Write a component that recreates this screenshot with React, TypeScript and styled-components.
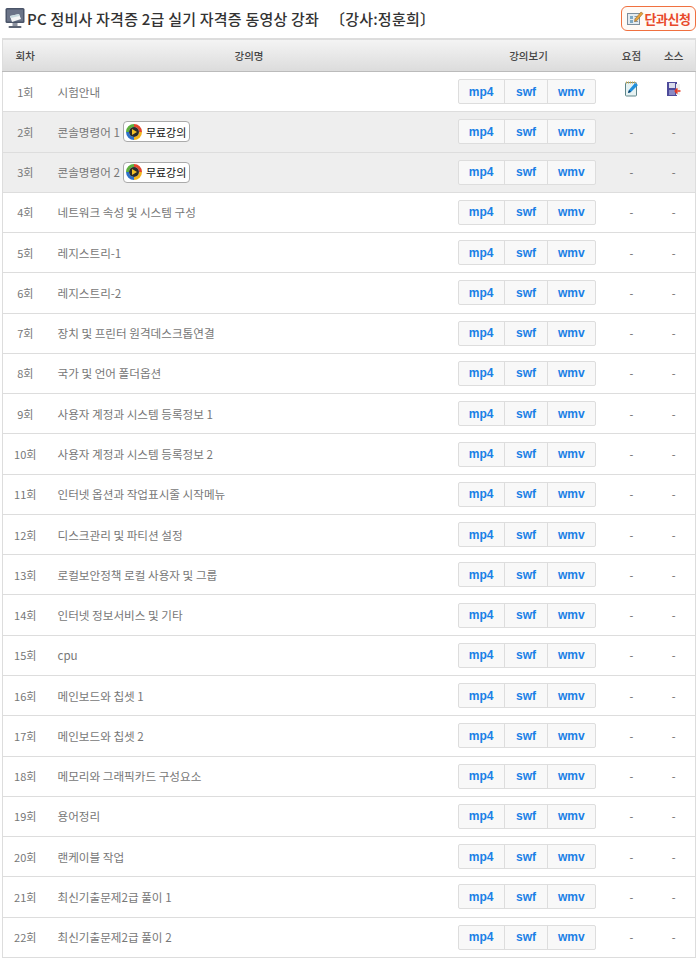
import React from "react";
import styled, { createGlobalStyle } from "styled-components";

const Global = createGlobalStyle`
  html, body { margin: 0; padding: 0; background: #fff; }
  body { font-family: "Noto Sans CJK KR", "Noto Sans", sans-serif; color: #555; }
`;

const Page = styled.div`
  width: 700px;
  height: 960px;
  overflow: hidden;
  box-sizing: border-box;
  padding: 0 4px 0 2px;
`;

const TitleBar = styled.div`
  height: 38px;
  display: flex;
  align-items: center;
  justify-content: space-between;
  padding: 0 0 2px 3px;
  box-sizing: border-box;
`;

const Title = styled.h1`
  margin: 0;
  display: flex;
  align-items: center;
  gap: 2px;
  font-size: 15px;
  font-weight: 500;
  color: #333;
  letter-spacing: 0.22px;
  white-space: pre;
`;

const ApplyButton = styled.a`
  display: flex;
  align-items: center;
  justify-content: center;
  gap: 1px;
  width: 75px;
  height: 25px;
  box-sizing: border-box;
  border: 1px solid #f0703f;
  border-radius: 6px;
  background: #fffaf6;
  color: #e8492a;
  font-size: 13px;
  font-weight: 700;
  letter-spacing: -0.5px;
`;

const Table = styled.table`
  width: 693px;
  table-layout: fixed;
  border-collapse: collapse;
  border-left: 1px solid #ddd;
  border-right: 1px solid #ddd;
`;

const HeadRow = styled.tr`
  height: 33px;
  background: linear-gradient(#f4f4f4, #dcdcdc);
  border-top: 1px solid #ddd;
  border-bottom: 1px solid #bbb;
`;

const HeadCell = styled.th<{ $inset?: number }>`
  padding: 0 0 0 ${(p) => p.$inset ?? 0}px;
  font-size: 10.5px;
  font-weight: 500;
  color: #444;
  text-align: center;
`;

const Row = styled.tr<{ $free?: boolean }>`
  height: 40.27px;
  background: ${(p) => (p.$free ? "#eeeeee" : "#ffffff")};
  border-bottom: 1px solid #ddd;
`;

const NumCell = styled.td`
  padding: 0;
  font-size: 11px;
  color: #777;
  text-align: center;
`;

const NameCell = styled.td`
  padding: 0 0 0 10px;
  font-size: 11.6px;
  color: #777;
  white-space: nowrap;
`;

const NameInner = styled.div`
  display: flex;
  align-items: center;
  gap: 3px;
`;

const MediaCell = styled.td`
  padding: 0;
`;

const CenterCell = styled.td`
  padding: 0;
  font-size: 11px;
  color: #666;
  text-align: center;
`;

const FreeBadge = styled.span`
  display: inline-flex;
  align-items: center;
  gap: 4px;
  width: 67px;
  height: 21px;
  box-sizing: border-box;
  padding-left: 2px;
  background: #fff;
  border: 1px solid #aaa;
  border-radius: 4px;
  font-size: 11px;
  color: #111;
`;

const Group = styled.div`
  display: flex;
  width: 138px;
  height: 25px;
  margin-left: 11px;
  box-sizing: border-box;
  border: 1px solid #ddd;
  border-radius: 2px;
  background: #f8f8f8;
`;

const Format = styled.a<{ $w: number; $last?: boolean }>`
  width: ${(p) => p.$w}px;
  display: flex;
  align-items: center;
  justify-content: center;
  border-right: ${(p) => (p.$last ? "none" : "1px solid #ddd")};
  font-family: "Liberation Sans", Arial, sans-serif;
  font-size: 12px;
  font-weight: 700;
  color: #1a80e6;
`;

const IconSvg = styled.svg<{ $lift?: boolean }>`
  display: inline-block;
  vertical-align: middle;
  margin-bottom: ${(p) => (p.$lift ? "5px" : "0")};
`;

const MonitorIcon = () => (
  <IconSvg width="20" height="23" viewBox="0 0 20 23">
    <rect x="0.5" y="1" width="19" height="15" rx="1.5" fill="#4a5468" />
    <rect x="2" y="2.5" width="16" height="12" fill="#6b7488" />
    <path d="M5 9l9-2 2 5-9 3z" fill="#f4f6f6" />
    <path d="M5 9l9-2 .6 2-9 2z" fill="#c8dbe0" />
    <rect x="7.5" y="16" width="5" height="3" fill="#8d93a0" />
    <rect x="3.5" y="19" width="13" height="2" rx="1" fill="#5c6474" />
  </IconSvg>
);

const FormIcon = () => (
  <IconSvg width="17" height="16" viewBox="0 0 17 16">
    <rect x="0.5" y="3.5" width="12" height="11" fill="#e4ebf0" stroke="#7d8e9c" />
    <path d="M3 6h3v3H3zM3 10h3v3H3z" fill="#7fa9c4" />
    <path d="M7.5 6.500h3.500M7.500 9h3.500M7.500 11.500h3.500" stroke="#8a9aa6" />
    <path d="M8 9l6-7 2 1.500-6 7-2.500 1z" fill="#e8a33c" stroke="#9c6a25" strokeWidth="0.6" />
  </IconSvg>
);

const PlayIcon = () => (
  <IconSvg width="16" height="16" viewBox="0 0 16 16">
    <path d="M8 0a8 8 0 0 1 8 8h-3a5 5 0 0 0-5-5z" fill="#e2462c" />
    <path d="M16 8a8 8 0 0 1-8 8v-3a5 5 0 0 0 5-5z" fill="#f3b51c" />
    <path d="M8 16a8 8 0 0 1-8-8h3a5 5 0 0 0 5 5z" fill="#2e70c8" />
    <path d="M0 8a8 8 0 0 1 8-8v3a5 5 0 0 0-5 5z" fill="#5db03c" />
    <circle cx="8" cy="8" r="5" fill="#2b2b2b" />
    <path d="M6 5l5 3-5 3z" fill="#f5c22a" />
  </IconSvg>
);

const NoteIcon = () => (
  <IconSvg $lift width="14" height="16" viewBox="0 0 14 16">
    <rect x="0.5" y="1.500" width="11" height="13.500" rx="1" fill="#e6f2f2" stroke="#5f8589" />
    <path d="M1 1.500h10" stroke="#c9a94f" strokeWidth="2" strokeDasharray="1 1" />
    <path d="M3 12l1-3 6-7 3 2-7 7z" fill="#1f8fdc" />
    <path d="M3 12l1-3 2 2z" fill="#143c5c" />
  </IconSvg>
);

const SourceIcon = () => (
  <IconSvg $lift width="14" height="16" viewBox="0 0 14 16">
    <rect x="0" y="1" width="10" height="14" fill="#4d4a9a" />
    <rect x="2" y="2" width="6" height="5" fill="#d9dcec" />
    <rect x="2" y="9" width="6" height="5" fill="#8a8ac4" />
    <rect x="9" y="3" width="4" height="11" fill="#eee" />
    <path d="M13.500 10H8.500M8 10l2.500-2.500M8 10l2.500 2.500" stroke="#e53a23" strokeWidth="1.600" fill="none" />
  </IconSvg>
);

const lectures = [
  "시험안내", "콘솔명령어 1", "콘솔명령어 2", "네트워크 속성 및 시스템 구성", "레지스트리-1", "레지스트리-2",
  "장치 및 프린터 원격데스크톱연결", "국가 및 언어 폴더옵션", "사용자 계정과 시스템 등록정보 1", "사용자 계정과 시스템 등록정보 2",
  "인터넷 옵션과 작업표시줄 시작메뉴", "디스크관리 및 파티션 설정", "로컬보안정책 로컬 사용자 및 그룹", "인터넷 정보서비스 및 기타",
  "cpu", "메인보드와 칩셋 1", "메인보드와 칩셋 2", "메모리와 그래픽카드 구성요소", "용어정리", "랜케이블 작업",
  "최신기출문제2급 풀이 1", "최신기출문제2급 풀이 2",
];

export default function App() {
  return (
    <Page>
      <Global />
      <TitleBar>
        <Title>
          <MonitorIcon />
          {"PC 정비사 자격증 2급 실기 자격증 동영상 강좌   〔강사:정훈희〕"}
        </Title>
        <ApplyButton>
          <FormIcon />
          단과신청
        </ApplyButton>
      </TitleBar>
      <Table>
        <colgroup>
          <col style={{ width: 45 }} />
          <col style={{ width: 399 }} />
          <col style={{ width: 164 }} />
          <col style={{ width: 42 }} />
          <col style={{ width: 43 }} />
        </colgroup>
        <thead>
          <HeadRow>
            <HeadCell>회차</HeadCell>
            <HeadCell $inset={4}>강의명</HeadCell>
            <HeadCell>강의보기</HeadCell>
            <HeadCell>요점</HeadCell>
            <HeadCell>소스</HeadCell>
          </HeadRow>
        </thead>
        <tbody>
          {lectures.map((name, i) => {
            const free = i === 1 || i === 2;
            return (
              <Row key={name} $free={free}>
                <NumCell>{i + 1}회</NumCell>
                <NameCell>
                  <NameInner>
                    {name}
                    {free && (
                      <FreeBadge>
                        <PlayIcon />
                        무료강의
                      </FreeBadge>
                    )}
                  </NameInner>
                </NameCell>
                <MediaCell>
                  <Group>
                    <Format $w={46}>mp4</Format>
                    <Format $w={43}>swf</Format>
                    <Format $w={47} $last>wmv</Format>
                  </Group>
                </MediaCell>
                <CenterCell>{i === 0 ? <NoteIcon /> : "-"}</CenterCell>
                <CenterCell>{i === 0 ? <SourceIcon /> : "-"}</CenterCell>
              </Row>
            );
          })}
        </tbody>
      </Table>
    </Page>
  );
}
